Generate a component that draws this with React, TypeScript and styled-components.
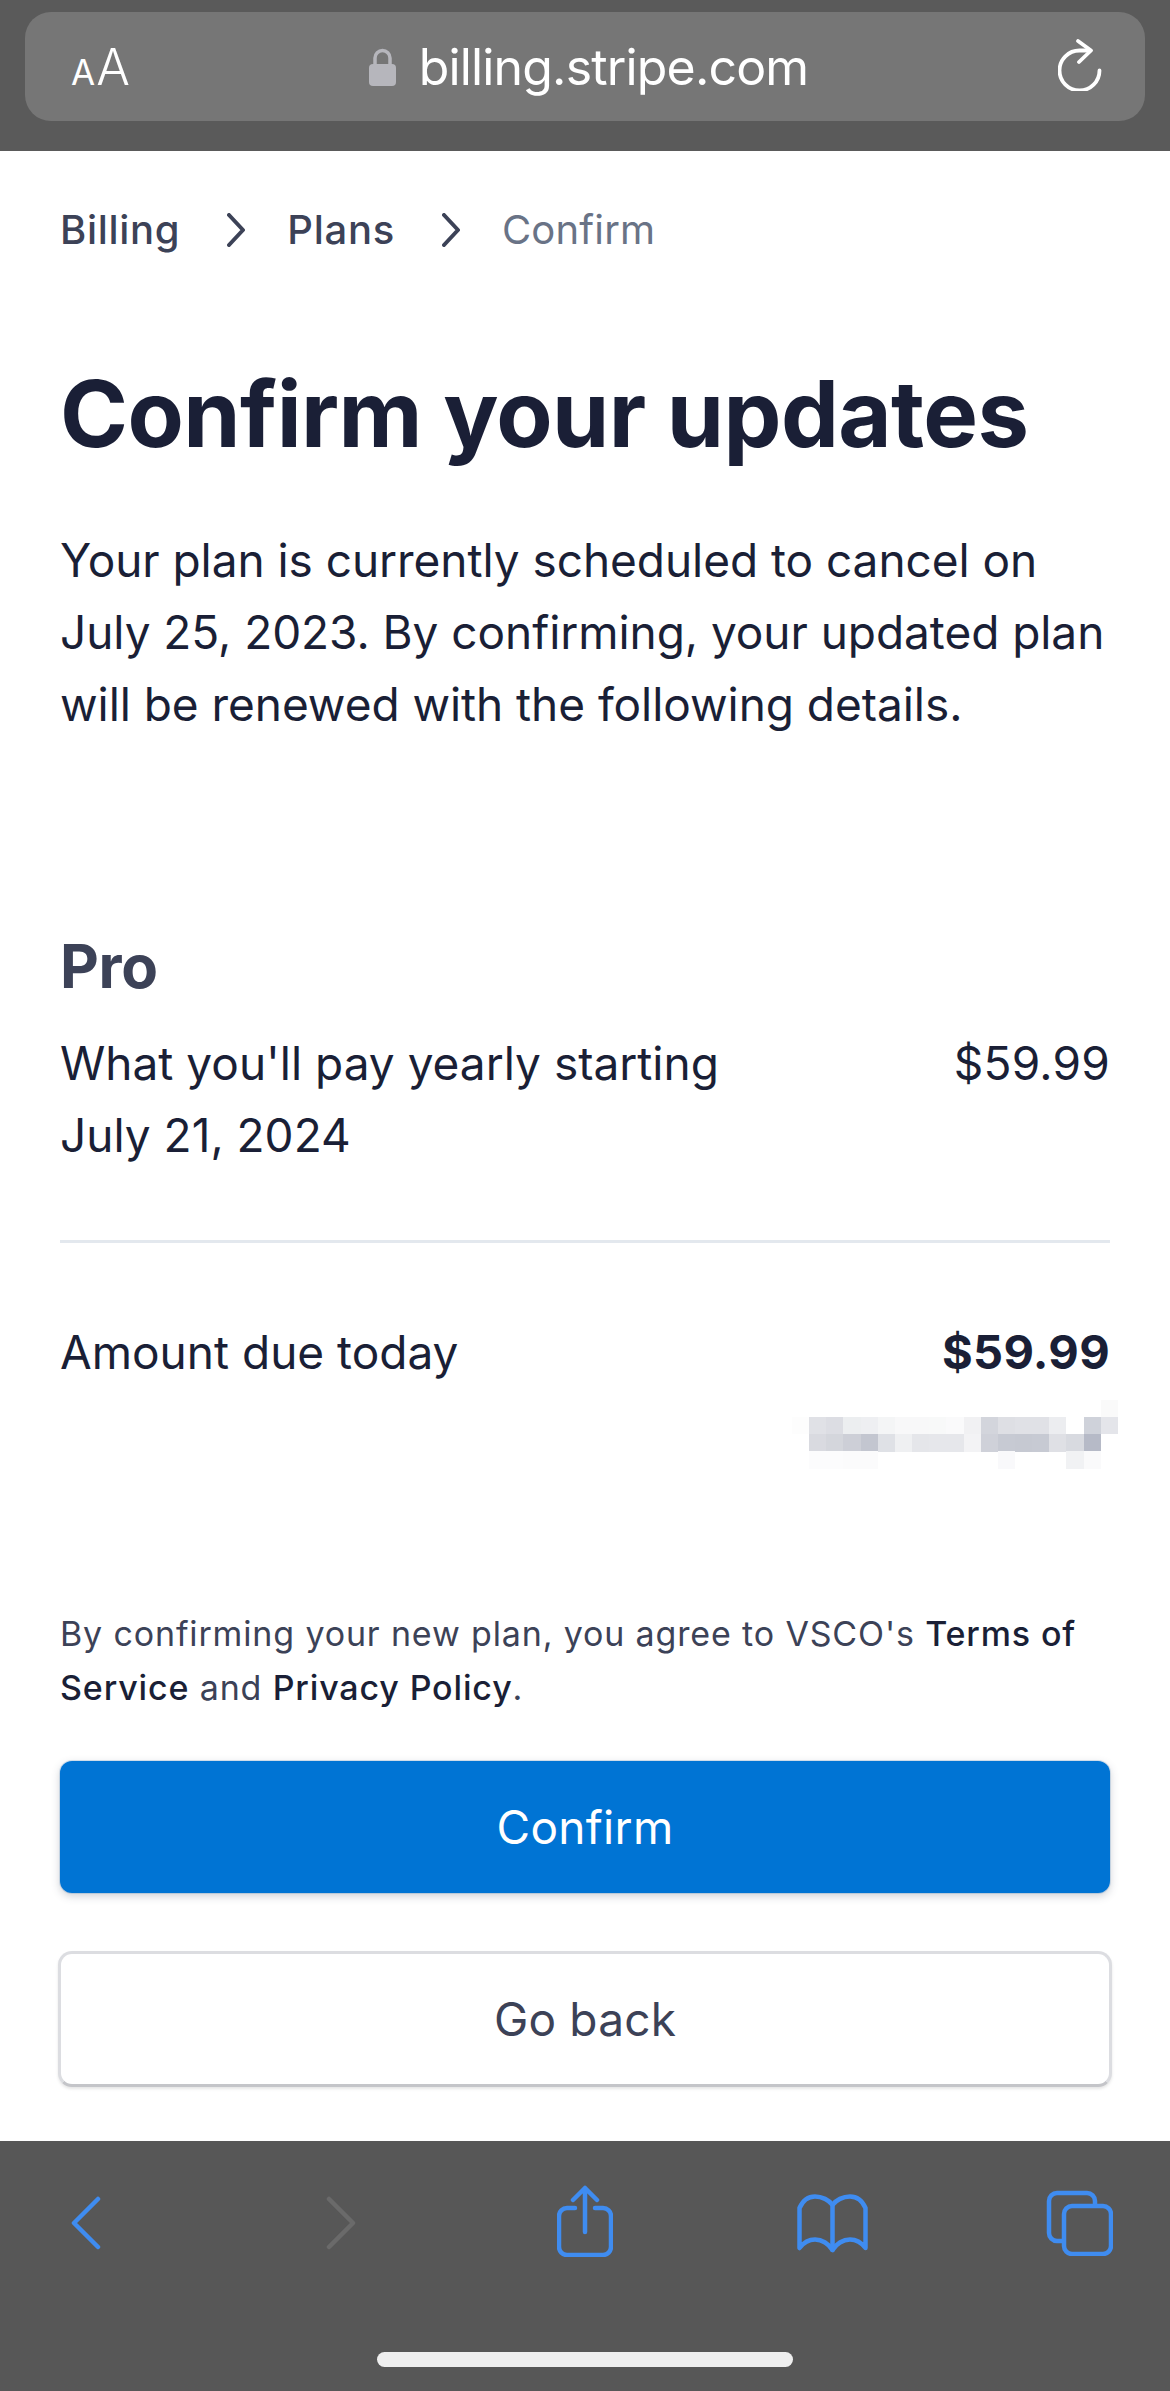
import React from 'react';
import styled, { createGlobalStyle } from 'styled-components';

const Global = createGlobalStyle`
  html, body { margin: 0; padding: 0; background: #fff; }
  * { box-sizing: border-box; }
  body { font-family: Inter, "Liberation Sans", sans-serif; -webkit-font-smoothing: antialiased; }
`;

const Page = styled.div`
  width: 1170px;
  height: 2391px;
  display: flex;
  flex-direction: column;
  overflow: hidden;
  background: #fff;
`;
const TopBar = styled.header`
  height: 151px;
  flex: none;
  padding: 12px 25px 0;
  background: #5a5a5a;
`;
const UrlPill = styled.div`
  height: 109px;
  border-radius: 26px;
  background: #767676;
  display: grid;
  grid-template-columns: 1fr auto 1fr;
  align-items: center;
  padding: 0 43px 0 46px;
  color: #fff;
`;
const TextSize = styled.div`
  display: flex;
  align-items: baseline;
  gap: 1px;
  font-size: 50px;
  font-weight: 300;
  line-height: 1;
  & > small { font-size: 35px; font-weight: 400; }
`;
const Url = styled.div`
  display: flex;
  align-items: center;
  gap: 23px;
  margin-left: 4px;
  font-size: 50px;
  letter-spacing: -0.83px;
  line-height: 1;
`;
const Reload = styled.svg`
  justify-self: end;
  width: 44px;
  height: 52px;
  margin-top: -3px;
`;
const Content = styled.main`
  flex: 1;
  padding: 0 60px;
  display: flex;
  flex-direction: column;
`;
const Crumbs = styled.nav`
  display: flex;
  align-items: center;
  margin-top: 52px;
  height: 54px;
`;
const Crumb = styled.span<{ $current?: boolean }>`
  font-size: 40px;
  line-height: 54px;
  font-weight: ${p => (p.$current ? 400 : 500)};
  letter-spacing: ${p => (p.$current ? '0.2px' : '0.7px')};
  color: ${p => (p.$current ? '#697386' : '#3c4257')};
`;
const CrumbSep = styled.svg`
  width: 18px;
  height: 34px;
  margin: 0 42px 0 47px;
`;
const Title = styled.h1`
  margin: 97px 0 0;
  font-size: 92px;
  line-height: 120px;
  font-weight: 700;
  letter-spacing: -0.6px;
  color: #1a1f36;
`;
const Lead = styled.p`
  margin: 50px 0 0;
  font-size: 46px;
  line-height: 72px;
  letter-spacing: -0.05px;
  color: #1a1f36;
`;
const PlanName = styled.h2`
  margin: 190px 0 0;
  font-size: 60px;
  line-height: 72px;
  font-weight: 700;
  letter-spacing: -0.3px;
  color: #3c4257;
`;
const Row = styled.div`
  display: flex;
  justify-content: space-between;
  align-items: flex-start;
  font-size: 46px;
  line-height: 72px;
  letter-spacing: 0;
  color: #1a1f36;
`;
const PlanRow = styled(Row)`
  margin-top: 25px;
  padding-bottom: 69px;
  border-bottom: 3px solid #e3e8ee;
`;
const RowLabel = styled.div`
  max-width: 700px;
`;
const Price = styled.div`
  letter-spacing: 0.25px;
`;
const DueRow = styled(Row)`
  margin-top: 73px;
`;
const Strong = styled.strong`
  font-size: 47px;
  font-weight: 700;
  letter-spacing: 0.33px;
`;
const Blur = styled.svg`
  display: block;
  align-self: flex-end;
  width: 326px;
  height: 69px;
  margin: 12px -8px 0 0;
`;
const Terms = styled.p`
  margin: 138px 0 0;
  font-size: 34px;
  line-height: 54px;
  letter-spacing: 0.85px;
  color: #3c4257;
  & > b { font-weight: 500; color: #1a1f36; }
`;
const PrimaryButton = styled.button`
  margin-top: 46px;
  height: 132px;
  width: 100%;
  flex: none;
  border: none;
  border-radius: 12px;
  background: #0074d4;
  color: #fff;
  font: 400 46px Inter, sans-serif;
  letter-spacing: 0.3px;
  box-shadow: 0 0 0 1px rgba(0, 90, 170, 0.15), 0 3px 9px rgba(60, 66, 87, 0.25);
`;
const SecondaryButton = styled.button`
  margin: 58px -2px 0;
  width: calc(100% + 4px);
  height: 136px;
  flex: none;
  border: 3px solid #dcdde1;
  border-bottom-color: #c4c5c9;
  border-radius: 14px;
  background: #fff;
  color: #3c4257;
  font: 400 46px Inter, sans-serif;
  letter-spacing: 0.2px;
  box-shadow: 0 2px 3px rgba(0, 0, 0, 0.1);
`;
const BottomBar = styled.footer`
  height: 250px;
  flex: none;
  background: #575757;
  display: flex;
  flex-direction: column;
  align-items: center;
`;
const Tools = styled.div`
  width: 100%;
  height: 211px;
  display: flex;
  align-items: flex-start;
  padding-left: 71px;
`;
const Tool = styled.svg<{ $gap: number; $top: number; $disabled?: boolean }>`
  flex: none;
  margin-left: ${p => p.$gap}px;
  margin-top: ${p => p.$top}px;
  fill: none;
  stroke: ${p => (p.$disabled ? '#6a6a6a' : '#3f8cf0')};
  stroke-width: 4.5;
  stroke-linecap: round;
  stroke-linejoin: round;
`;
const HomeIndicator = styled.div`
  width: 416px;
  height: 15px;
  border-radius: 8px;
  background: #efefef;
`;

type Cell = [number, number, string];
const row1 = ['#fdfdfd','#e0e1e6','#dcdde3','#eceef0','#eeeff2','#f4f5f6','#f8f8f9','#f8f8f9','#f8f9f9','#fafafb','#f1f1f3','#d3d5dc','#dedfe4','#e0e1e6','#e0e1e6','#ecedf0','#ffffff','#cfd2da','#e4e5ea'];
const row2 = ['#ffffff','#d9dae0','#d4d6dc','#cdcfd7','#c3c6d0','#dfe1e6','#eff0f2','#e5e6ea','#e6e7eb','#e6e7eb','#f3f3f5','#cfd1d9','#c7cad3','#c6c9d2','#c7cad3','#dfe0e5','#d8dae0','#b6bac7','#ffffff'];
const cells: Cell[] = [
  [18, 0, '#fafafa'],
  ...row1.map((c, i): Cell => [i, 1, c]),
  ...row2.map((c, i): Cell => [i, 2, c]),
  [1, 3, '#fcfcfd'], [2, 3, '#fcfcfd'], [3, 3, '#fbfbfc'], [4, 3, '#fbfbfc'],
  [12, 3, '#f9f9fb'], [16, 3, '#f1f2f4'], [17, 3, '#fafafb'],
];

export default function App() {
  return (
    <Page>
      <Global />
      <TopBar>
        <UrlPill>
          <TextSize><small>A</small>A</TextSize>
          <Url>
            <svg width="27" height="38" viewBox="0 0 27 38">
              <path d="M6 17V10a7.5 7.5 0 0 1 15 0v7" fill="none" stroke="#b6b6bc" strokeWidth="3.5" />
              <rect x="0" y="16" width="27" height="22" rx="4" fill="#b6b6bc" />
            </svg>
            <span>billing.stripe.com</span>
          </Url>
          <Reload viewBox="0 0 44 52" fill="none" stroke="#fff" strokeWidth="3.8" strokeLinecap="round" strokeLinejoin="round">
            <path d="M32 11.5H21.5A20 20 0 1 0 41.5 31.5" />
            <path d="M20 2l13 9.5L21 23" />
          </Reload>
        </UrlPill>
      </TopBar>
      <Content>
        <Crumbs>
          <Crumb>Billing</Crumb>
          <CrumbSep viewBox="0 0 18 34" fill="none" stroke="#3c4257" strokeWidth="4" strokeLinecap="round" strokeLinejoin="round">
            <path d="M2 2l14 15L2 32" />
          </CrumbSep>
          <Crumb>Plans</Crumb>
          <CrumbSep viewBox="0 0 18 34" fill="none" stroke="#3c4257" strokeWidth="4" strokeLinecap="round" strokeLinejoin="round">
            <path d="M2 2l14 15L2 32" />
          </CrumbSep>
          <Crumb $current>Confirm</Crumb>
        </Crumbs>
        <Title>Confirm your updates</Title>
        <Lead>
          Your plan is currently scheduled to cancel on<br />
          July 25, 2023. By confirming, your updated plan<br />
          will be renewed with the following details.
        </Lead>
        <PlanName>Pro</PlanName>
        <PlanRow>
          <RowLabel>What you'll pay yearly starting<br />July 21, 2024</RowLabel>
          <Price>$59.99</Price>
        </PlanRow>
        <DueRow>
          <div>Amount due today</div>
          <Strong>$59.99</Strong>
        </DueRow>
        <Blur viewBox="0 0 326 69" shapeRendering="crispEdges">
          {cells.map(([x, y, c]) => (
            <rect key={`${x}-${y}`} x={x * 17.15} y={y * 17.15} width="17.6" height="17.6" fill={c} />
          ))}
        </Blur>
        <Terms>
          By confirming your new plan, you agree to VSCO's <b>Terms of</b><br />
          <b>Service</b> and <b>Privacy Policy</b>.
        </Terms>
        <PrimaryButton>Confirm</PrimaryButton>
        <SecondaryButton>Go back</SecondaryButton>
      </Content>
      <BottomBar>
        <Tools>
          <Tool $gap={0} $top={55} width="30" height="54" viewBox="0 0 30 54">
            <path d="M27 3L3 27l24 24" />
          </Tool>
          <Tool $gap={225} $top={55} $disabled width="30" height="54" viewBox="0 0 30 54">
            <path d="M3 3l24 24L3 51" />
          </Tool>
          <Tool $gap={201} $top={44} width="56" height="72" viewBox="0 0 56 72">
            <path d="M18 23H10a8 8 0 0 0-8 8v31a8 8 0 0 0 8 8h36a8 8 0 0 0 8-8V31a8 8 0 0 0-8-8h-8" />
            <path d="M28 3v44M16 15L28 3l12 12" />
          </Tool>
          <Tool $gap={184} $top={53} width="71" height="59" viewBox="0 0 71 59">
            <path d="M2.5 54V14C6 6 12 2.5 18 2.5c7 0 14 3.5 17.5 8.5C39 6 46 2.5 53 2.5c6 0 12 3.5 15.5 11.5v40c-4.5-6-9.5-8.5-15.5-8.5-7 0-14 4.5-17.5 10.5C32 50 25 45.5 18 45.5c-6 0-11 2.5-15.5 8.5z" />
            <path d="M35.5 11v45" />
          </Tool>
          <Tool $gap={178} $top={49} width="67" height="66" viewBox="0 0 67 66">
            <rect x="18" y="16" width="47" height="48" rx="8" />
            <path d="M49 14v-3a8 8 0 0 0-8-8H11a8 8 0 0 0-8 8v32a8 8 0 0 0 8 8h5" />
          </Tool>
        </Tools>
        <HomeIndicator />
      </BottomBar>
    </Page>
  );
}
